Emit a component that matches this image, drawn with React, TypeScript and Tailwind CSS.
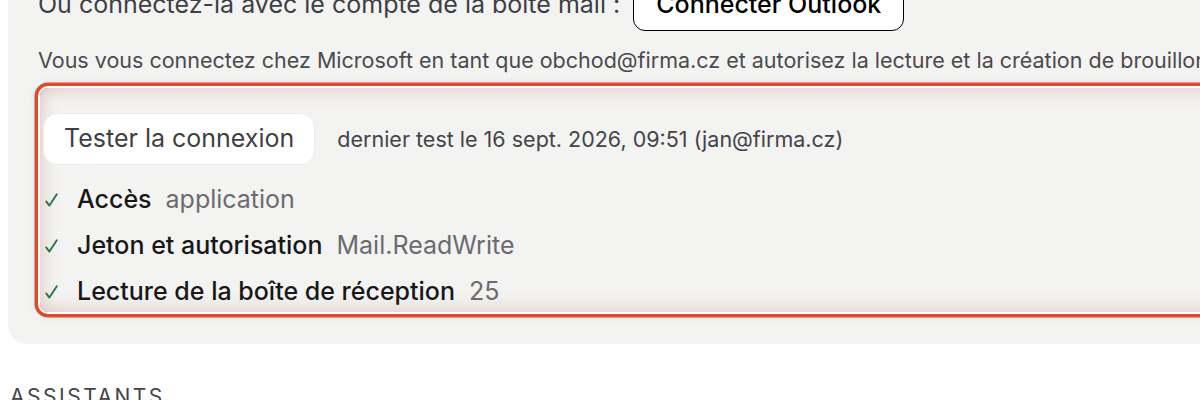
import React from 'react'

const checks = [
  { label: 'Accès', value: 'application' },
  { label: 'Jeton et autorisation', value: 'Mail.ReadWrite' },
  { label: 'Lecture de la boîte de réception', value: '25' }
]

const Tick = () => (
  <svg width="13" height="14" viewBox="0 0 13 14" fill="none" className="text-[#2b7447]">
    <path d="M1.2 8.4 L4.4 12.6 L11.8 1.2" stroke="currentColor" strokeWidth="1.9" strokeLinecap="round" strokeLinejoin="round" />
  </svg>
)

const App: React.FC = () => {
  return (
    <div
      className="h-[400px] w-[1200px] overflow-hidden bg-white"
      style={{ fontFamily: 'Inter, "Noto Sans", sans-serif' }}
    >
      {/* Outlook connection panel */}
      <div className="ml-[8px] mt-[-21px] w-[1400px] rounded-b-[20px] bg-[#f3f3f1] pb-[32px] pl-[30px]">
        <div className="flex h-[52px] items-center gap-[13px]">
          <span className="whitespace-nowrap text-[25px] text-[#3f3f46]">
            Ou connectez-la avec le compte de la boîte mail :
          </span>
          <button className="h-[52px] whitespace-nowrap rounded-[12px] border-[1.5px] border-black bg-white px-[22px] text-[25px] font-medium text-black">
            Connecter Outlook
          </button>
        </div>

        <p className="mt-[15px] whitespace-nowrap text-[21.5px] leading-[28px] text-[#4a4a4f]">
          Vous vous connectez chez Microsoft en tant que obchod@firma.cz et autorisez la lecture et la création de brouillons dans cette boîte.
        </p>

        {/* Highlighted test block */}
        <div className="ml-[2px] mt-[14px] h-[224px] rounded-[8px] pl-[3px] pt-[25px] ring-[3.5px] ring-[#de4a2c] ring-offset-2 ring-offset-white shadow-[0_0_14px_rgba(0,0,0,0.18)] inset-shadow-[0_0_18px_rgba(170,90,80,0.34)]">
          <div className="flex items-center gap-[22px]">
            <button className="h-[52px] whitespace-nowrap rounded-[14px] border border-[#ececea] bg-white px-[20px] text-[25px] text-[#3f3f46]">
              Tester la connexion
            </button>
            <span className="whitespace-nowrap text-[21.5px] text-[#44444a]">
              dernier test le 16 sept. 2026, 09:51 (jan@firma.cz)
            </span>
          </div>

          <ul className="mt-[18px] flex flex-col gap-[13px]">
            {checks.map((c) => (
              <li key={c.label} className="flex h-[33px] items-center whitespace-nowrap text-[25px]">
                <span className="flex w-[34px] items-center pl-[2px] pt-[1px]">
                  <Tick />
                </span>
                <span className="font-medium text-[#18181b]">{c.label}</span>
                <span className="ml-[14px] text-[#6b6b70]">{c.value}</span>
              </li>
            ))}
          </ul>
        </div>
      </div>

      <h2 className="ml-[10px] mt-[39px] text-[21px] leading-[28px] uppercase tracking-[0.12em] text-[#44444a]">
        Assistants
      </h2>
    </div>
  )
}

export default App
